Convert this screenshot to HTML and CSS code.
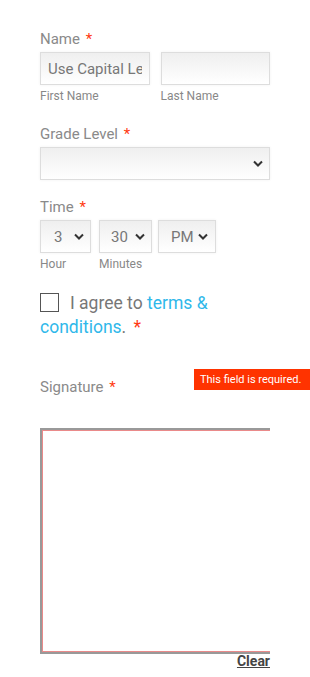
FILE: index.html
```html
<!DOCTYPE html>
<html lang="en">
<head>
    <meta charset="UTF-8">
    <meta name="viewport" content="width=device-width, initial-scale=1.0">
    <title>Form</title>
    <link rel="stylesheet" href="styles.css">
</head>
<body>
    <div class="form">
        <div class="field first">
            <label class="label">Name <span class="req">*</span></label>
            <div class="row">
                <div class="sub">
                    <input type="text" class="input" value="Use Capital Letters">
                    <span class="hint">First Name</span>
                </div>
                <div class="sub">
                    <input type="text" class="input">
                    <span class="hint">Last Name</span>
                </div>
            </div>
        </div>

        <div class="field">
            <label class="label">Grade Level <span class="req">*</span></label>
            <div class="select wide"><span></span><svg viewBox="0 0 10 6"><path d="M1 1l4 4 4-4" /></svg></div>
        </div>

        <div class="field">
            <label class="label">Time <span class="req">*</span></label>
            <div class="row time">
                <div class="sub">
                    <div class="select hour"><span>3</span><svg viewBox="0 0 10 6"><path d="M1 1l4 4 4-4" /></svg></div>
                    <span class="hint">Hour</span>
                </div>
                <div class="sub">
                    <div class="select min"><span>30</span><svg viewBox="0 0 10 6"><path d="M1 1l4 4 4-4" /></svg></div>
                    <span class="hint">Minutes</span>
                </div>
                <div class="sub ampm-col">
                    <div class="select ampm"><span>PM</span><svg viewBox="0 0 10 6"><path d="M1 1l4 4 4-4" /></svg></div>
                </div>
            </div>
        </div>

        <p class="agree"><span class="box"></span>I agree to <a href="#">terms &amp; conditions</a>. <span class="req">*</span></p>

        <div class="sig">
            <label class="label">Signature <span class="req">*</span></label>
            <div class="error">This field is required.</div>
            <div class="pad-wrap"><div class="pad"></div></div>
            <a href="#" class="clear">Clear</a>
        </div>
    </div>
</body>
</html>
```

FILE: styles.css
```css
body {
    margin: 0;
    font-family: Roboto, "Noto Sans", sans-serif;
    background: white;
    color: #888;
}
.form {
    width: 230px;
    padding: 29px 40px 0 40px;
    position: relative;
}
.field {
    margin-bottom: 17px;
}
.field.first {
    margin-bottom: 21px;
}
.label {
    display: block;
    font-size: 15px;
    line-height: 20px;
    color: #8a8a8a;
    margin-bottom: 3px;
}
.req {
    color: #ff3a12;
    margin-left: 2px;
}
.row {
    display: flex;
    gap: 11px;
}
.sub {
    display: flex;
    flex-direction: column;
    flex: 1;
    min-width: 0;
}
.hint {
    font-size: 12px;
    line-height: 14px;
    color: #888;
    margin-top: 4px;
}
.input {
    box-sizing: border-box;
    width: 100%;
    height: 33px;
    margin: 0;
    border: 1px solid #ddd;
    background: linear-gradient(#efefef, #fff);
    box-shadow: 0 0 3px rgba(0, 0, 0, 0.06);
    font-family: inherit;
    font-size: 15px;
    color: #777;
    padding: 0 7px;
    outline: none;
}
.select {
    box-sizing: border-box;
    height: 33px;
    border: 1px solid #ddd;
    background: linear-gradient(#efefef, #fff);
    box-shadow: 0 0 3px rgba(0, 0, 0, 0.06);
    display: flex;
    align-items: center;
    justify-content: space-between;
    padding: 0 6px 0 13px;
    font-size: 15px;
    color: #777;
}
.select svg {
    width: 10px;
    height: 7px;
    fill: none;
    stroke: #333;
    stroke-width: 2;
}
.wide {
    width: 230px;
}
.time {
    gap: 8px;
}
.time .sub {
    flex: none;
}
.time .ampm-col {
    margin-left: -2px;
}
.hour { width: 51px; }
.min { width: 53px; padding-left: 11px; }
.ampm { width: 58px; padding-left: 12px; padding-right: 7px; }
.agree {
    margin: 20px 0 0 0;
    font-size: 17.5px;
    line-height: 24px;
    color: #777;
}
.box {
    display: inline-block;
    box-sizing: border-box;
    width: 19px;
    height: 19px;
    border: 1px solid #555;
    vertical-align: -3px;
    margin-right: 11px;
}
.agree a {
    color: #2fb8ea;
    text-decoration: none;
}
.agree .req {
    margin-left: 3px;
}
.sig {
    position: relative;
    margin-top: 38px;
}
.error {
    position: absolute;
    top: -8px;
    left: 154px;
    width: 116px;
    height: 21px;
    box-sizing: border-box;
    padding-left: 6px;
    background: #ff3300;
    color: white;
    font-size: 11px;
    line-height: 21px;
    white-space: nowrap;
}
.pad-wrap {
    margin-top: 31px;
    width: 230px;
    overflow: hidden;
}
.pad {
    box-sizing: border-box;
    width: 240px;
    height: 226px;
    border: 2px solid #999;
    box-shadow: inset 0 0 0 1px #ea8a8a;
    background: white;
}
.clear {
    display: block;
    text-align: right;
    font-size: 14px;
    font-weight: bold;
    color: #444;
    text-decoration: underline;
    line-height: 15px;
}
```
